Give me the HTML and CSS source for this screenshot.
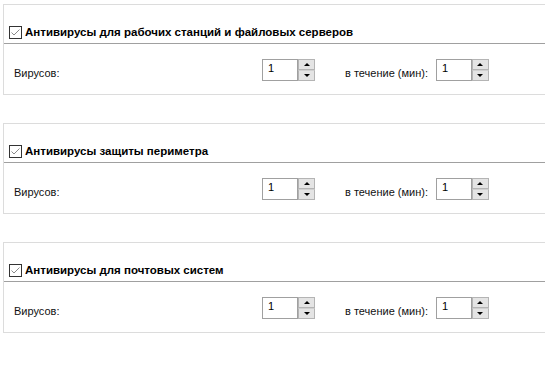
FILE: index.html
```html
<!DOCTYPE html>
<html lang="ru">
<head>
  <meta charset="UTF-8">
  <title>Антивирусы</title>
  <link rel="stylesheet" href="styles.css">
</head>
<body>

<div class="group">
  <div class="group-head">
    <span class="check">
      <svg width="13" height="13" viewBox="0 0 13 13"><rect x="0.5" y="0.5" width="12" height="12" fill="#fff" stroke="#333"/><path d="M2.5 6.5 L5 9 L10.5 3.5" fill="none" stroke="#8a8a8a" stroke-width="1"/></svg>
    </span>
    <span class="title">Антивирусы для рабочих станций и файловых серверов</span>
  </div>
  <div class="group-body">
    <span class="lbl lbl-first">Вирусов:</span>
    <div class="spin">
      <div class="spin-val">1</div>
      <div class="spin-btns">
        <div class="spin-btn"><span class="arr-up"></span></div>
        <div class="spin-btn"><span class="arr-down"></span></div>
      </div>
    </div>
    <span class="lbl lbl-time">в течение (мин):</span>
    <div class="spin">
      <div class="spin-val">1</div>
      <div class="spin-btns">
        <div class="spin-btn"><span class="arr-up"></span></div>
        <div class="spin-btn"><span class="arr-down"></span></div>
      </div>
    </div>
  </div>
</div>

<div class="group">
  <div class="group-head">
    <span class="check">
      <svg width="13" height="13" viewBox="0 0 13 13"><rect x="0.5" y="0.5" width="12" height="12" fill="#fff" stroke="#333"/><path d="M2.5 6.5 L5 9 L10.5 3.5" fill="none" stroke="#8a8a8a" stroke-width="1"/></svg>
    </span>
    <span class="title">Антивирусы защиты периметра</span>
  </div>
  <div class="group-body">
    <span class="lbl lbl-first">Вирусов:</span>
    <div class="spin">
      <div class="spin-val">1</div>
      <div class="spin-btns">
        <div class="spin-btn"><span class="arr-up"></span></div>
        <div class="spin-btn"><span class="arr-down"></span></div>
      </div>
    </div>
    <span class="lbl lbl-time">в течение (мин):</span>
    <div class="spin">
      <div class="spin-val">1</div>
      <div class="spin-btns">
        <div class="spin-btn"><span class="arr-up"></span></div>
        <div class="spin-btn"><span class="arr-down"></span></div>
      </div>
    </div>
  </div>
</div>

<div class="group">
  <div class="group-head">
    <span class="check">
      <svg width="13" height="13" viewBox="0 0 13 13"><rect x="0.5" y="0.5" width="12" height="12" fill="#fff" stroke="#333"/><path d="M2.5 6.5 L5 9 L10.5 3.5" fill="none" stroke="#8a8a8a" stroke-width="1"/></svg>
    </span>
    <span class="title">Антивирусы для почтовых систем</span>
  </div>
  <div class="group-body">
    <span class="lbl lbl-first">Вирусов:</span>
    <div class="spin">
      <div class="spin-val">1</div>
      <div class="spin-btns">
        <div class="spin-btn"><span class="arr-up"></span></div>
        <div class="spin-btn"><span class="arr-down"></span></div>
      </div>
    </div>
    <span class="lbl lbl-time">в течение (мин):</span>
    <div class="spin">
      <div class="spin-val">1</div>
      <div class="spin-btns">
        <div class="spin-btn"><span class="arr-up"></span></div>
        <div class="spin-btn"><span class="arr-down"></span></div>
      </div>
    </div>
  </div>
</div>

</body>
</html>
```

FILE: styles.css
```css
body {
  font-family: "Liberation Sans", Arial, sans-serif;
  font-size: 11px;
  color: #111;
  background: #fff;
  margin: 0;
  padding-top: 4px;
  overflow: hidden;
}
.group {
  margin: 0 -4px 28px 3px;
  border: 1px solid #dcdcdc;
}
.group-head {
  height: 39px;
  display: flex;
  align-items: flex-end;
  padding: 0 0 4px 5px;
  box-sizing: border-box;
  border-bottom: 1px solid #a0a0a0;
}
.check {
  display: flex;
  width: 13px;
  height: 13px;
  margin-right: 3px;
}
.title {
  font-size: 11.5px;
  font-weight: bold;
  color: #000;
  line-height: 13px;
}
.group-body {
  display: flex;
  align-items: center;
  padding: 15px 0 13px 10px;
}
.lbl {
  padding-top: 6px;
}
.lbl-first {
  width: 248px;
}
.lbl-time {
  margin: 0 8px 0 30px;
}
.spin {
  display: flex;
  width: 53px;
  height: 22px;
}
.spin-val {
  flex: 1;
  border: 1px solid #a0a0a0;
  padding: 2px 0 0 5px;
  color: #000;
}
.spin-btns {
  width: 17px;
  display: flex;
  flex-direction: column;
}
.spin-btn {
  flex: 1;
  background: #e4e4e4;
  border: 1px solid #b4b4b4;
  display: flex;
  align-items: center;
  justify-content: center;
}
.spin-btn + .spin-btn {
  border-top-color: #d0d0d0;
}
.arr-up {
  width: 0;
  height: 0;
  border-left: 3px solid transparent;
  border-right: 3px solid transparent;
  border-bottom: 3px solid #000;
}
.arr-down {
  width: 0;
  height: 0;
  border-left: 3px solid transparent;
  border-right: 3px solid transparent;
  border-top: 3px solid #000;
}
```
